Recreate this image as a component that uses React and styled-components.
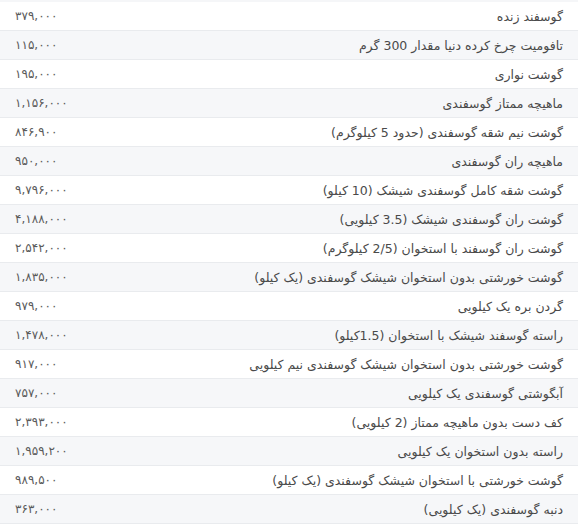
import React from "react";
import styled, { createGlobalStyle } from "styled-components";

const Global = createGlobalStyle`
  html, body { margin: 0; padding: 0; background: #ffffff; }
  body { font-family: "DejaVu Sans", "Noto Sans", sans-serif; }
`;

const Table = styled.div`
  width: 578px;
  padding-top: 2px;
  background: #f5f6f8;
  direction: rtl;
`;

const Row = styled.div`
  display: flex;
  align-items: center;
  justify-content: space-between;
  height: 28px;
  padding: 0 15px;
  border-bottom: 1px solid #e9ebee;
  background: ${(p) => (p.$alt ? "#f6f7f9" : "#ffffff")};
  color: #4a4a4a;
  font-size: 12.5px;
`;

const Name = styled.span`
  text-align: right;
  white-space: nowrap;
`;

const Price = styled.span`
  text-align: left;
  white-space: nowrap;
  direction: ltr;
  font-size: 12px;
  color: #5a5a5a;
`;

const rows = [
  ["گوسفند زنده", "۳۷۹,۰۰۰"],
  ["تافومیت چرخ کرده دنیا مقدار 300 گرم", "۱۱۵,۰۰۰"],
  ["گوشت نواری", "۱۹۵,۰۰۰"],
  ["ماهیچه ممتاز گوسفندی", "۱,۱۵۶,۰۰۰"],
  ["گوشت نیم شقه گوسفندی (حدود 5 کیلوگرم)", "۸۴۶,۹۰۰"],
  ["ماهیچه ران گوسفندی", "۹۵۰,۰۰۰"],
  ["گوشت شقه کامل گوسفندی شیشک (10 کیلو)", "۹,۷۹۶,۰۰۰"],
  ["گوشت ران گوسفندی شیشک (3.5 کیلویی)", "۴,۱۸۸,۰۰۰"],
  ["گوشت ران گوسفند با استخوان (2/5 کیلوگرم)", "۲,۵۴۲,۰۰۰"],
  ["گوشت خورشتی بدون استخوان شیشک گوسفندی (یک کیلو)", "۱,۸۳۵,۰۰۰"],
  ["گردن بره یک کیلویی", "۹۷۹,۰۰۰"],
  ["راسته گوسفند شیشک با استخوان (1.5کیلو)", "۱,۴۷۸,۰۰۰"],
  ["گوشت خورشتی بدون استخوان شیشک گوسفندی نیم کیلویی", "۹۱۷,۰۰۰"],
  ["آبگوشتی گوسفندی یک کیلویی", "۷۵۷,۰۰۰"],
  ["کف دست بدون ماهیچه ممتاز (2 کیلویی)", "۲,۳۹۳,۰۰۰"],
  ["راسته بدون استخوان یک کیلویی", "۱,۹۵۹,۲۰۰"],
  ["گوشت خورشتی با استخوان شیشک گوسفندی (یک کیلو)", "۹۸۹,۵۰۰"],
  ["دنبه گوسفندی (یک کیلویی)", "۳۶۳,۰۰۰"],
];

export default function App() {
  return (
    <>
      <Global />
      <Table>
        {rows.map(([name, price], i) => (
          <Row key={i} $alt={i % 2 === 1}>
            <Name>{name}</Name>
            <Price>{price}</Price>
          </Row>
        ))}
      </Table>
    </>
  );
}
